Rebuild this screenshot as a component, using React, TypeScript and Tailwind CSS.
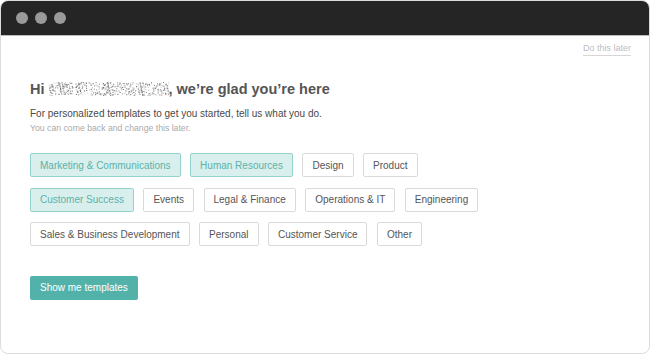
import React from "react";

const rows: { label: string; selected?: boolean }[][] = [
  [
    { label: "Marketing & Communications", selected: true },
    { label: "Human Resources", selected: true },
    { label: "Design" },
    { label: "Product" },
  ],
  [
    { label: "Customer Success", selected: true },
    { label: "Events" },
    { label: "Legal & Finance" },
    { label: "Operations & IT" },
    { label: "Engineering" },
  ],
  [
    { label: "Sales & Business Development" },
    { label: "Personal" },
    { label: "Customer Service" },
    { label: "Other" },
  ],
];

function Redacted() {
  const dots: React.ReactElement[] = [];
  let seed = 7;
  const rnd = () => {
    seed = (seed * 9301 + 49297) % 233280;
    return seed / 233280;
  };
  for (let i = 0; i < 520; i++) {
    const x = rnd() * 120;
    const y = 2 + rnd() * 13;
    const g = Math.floor(90 + rnd() * 130);
    dots.push(
      <rect key={i} x={x} y={y} width={1} height={1} fill={`rgb(${g},${g},${g})`} />
    );
  }
  return (
    <svg width="120" height="17" viewBox="0 0 120 17" className="inline-block align-[-3px]">
      {dots}
    </svg>
  );
}

export default function App() {
  return (
    <div
      className="w-[650px] h-[356px] bg-white"
      style={{ fontFamily: "'Liberation Sans', Arial, sans-serif" }}
    >
      <div className="w-[650px] h-[354px] rounded-[8px] border border-[#dcdcdc] overflow-hidden flex flex-col">
        <div className="h-[35px] bg-[#252525] border-b border-[#bdbdbd] flex items-center gap-[7px] pl-[15px] shrink-0">
          <span className="w-[12px] h-[12px] rounded-full bg-[#9a9a9a]" />
          <span className="w-[12px] h-[12px] rounded-full bg-[#9a9a9a]" />
          <span className="w-[12px] h-[12px] rounded-full bg-[#9a9a9a]" />
        </div>
        <div className="flex-1 flex flex-col px-[29px]">
          <div className="flex justify-end pt-[7px] mr-[-11px]">
            <span className="text-[9px] text-[#bdbdbd] border-b border-[#d6d6d6] leading-[11px] pb-[1px]">
              Do this later
            </span>
          </div>
          <h1 className="mt-[23px] text-[14.5px] font-bold text-[#555] leading-[20px]">
            Hi <Redacted />, we’re glad you’re here
          </h1>
          <p className="mt-[8px] text-[10px] text-[#4a4a4a] leading-[14px]">
            For personalized templates to get you started, tell us what you do.
          </p>
          <p className="mt-[1px] text-[8.7px] text-[#aaaaaa] leading-[12px]">
            You can come back and change this later.
          </p>
          <div className="mt-[19px] flex flex-col gap-[10.5px]">
            {rows.map((row, i) => (
              <div key={i} className="flex gap-[9.5px]">
                {row.map((c) => (
                  <div
                    key={c.label}
                    className={
                      c.selected
                        ? "h-[24px] px-[9px] flex items-center rounded-[2px] border border-[#94d2cc] bg-[#d9efed] text-[#5cb2a9] text-[10px]"
                        : "h-[24px] px-[9px] flex items-center rounded-[2px] border border-[#dadada] bg-white text-[#555] text-[10px]"
                    }
                  >
                    {c.label}
                  </div>
                ))}
              </div>
            ))}
          </div>
          <div className="mt-[28px]">
            <button className="h-[24px] px-[10px] rounded-[2px] bg-[#52b2aa] text-white text-[10px]">
              Show me templates
            </button>
          </div>
        </div>
      </div>
    </div>
  );
}
